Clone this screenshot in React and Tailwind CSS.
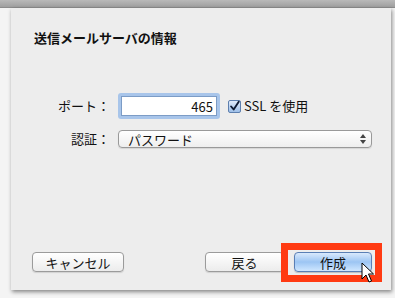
import React from "react";

const jp = { fontFamily: '"Lucida Grande", "Noto Sans CJK JP", "Noto Sans", sans-serif' };

const MacButton = ({ label, width, primary }) => (
  <div
    className={
      "h-[20px] rounded-[4px] border flex items-center justify-center text-[13px] leading-none text-[#111] " +
      (primary
        ? "border-[#5a7fb5] bg-gradient-to-b from-[#d9e9fc] via-[#9cc5f3] to-[#cfe7ff] shadow-[0_1px_1px_rgba(0,0,0,0.2)]"
        : "border-[#9b9b9b] bg-gradient-to-b from-white to-[#ececec] shadow-[0_1px_1px_rgba(0,0,0,0.12)]")
    }
    style={{ width }}
  >
    {label}
  </div>
);

const Cursor = () => (
  <svg width="14" height="22" viewBox="0 0 14 22" className="absolute left-[361px] top-[262px]">
    <path
      d="M1 1 L1 17 L5 13 L8 20 L10.5 19 L7.5 12 L12.5 12 Z"
      fill="white"
      stroke="black"
      strokeWidth="1"
      strokeLinejoin="round"
    />
  </svg>
);

export default function App() {
  return (
    <div className="relative w-[395px] h-[298px] overflow-hidden bg-[#f4f4f4]" style={jp}>
      <div className="h-[8px] bg-gradient-to-b from-[#b9b9b9] to-[#9f9f9f] border-b border-[#8c8c8c]" />

      <div className="ml-[11px] w-[380px] h-[282px] bg-[#ededed] shadow-[1px_2px_4px_rgba(0,0,0,0.45)] flex flex-col">
        <div className="pt-[21px] pl-[23px] h-[39px] text-[13px] leading-[18px] font-bold text-[#111]">
          送信メールサーバの情報
        </div>

        <div className="mt-[46px] h-[26px] flex items-center text-[13px] text-[#111]">
          <div className="w-[99px] text-right">ポート：</div>
          <div className="ml-[8px] w-[102px] h-[26px] p-[3px] rounded-[3px] bg-[#a8c5ea]">
            <div className="h-full bg-white border border-[#7c9cc6] flex items-center justify-end pr-[3px] leading-none">
              465
            </div>
          </div>
          <div className="ml-[8px] w-[13px] h-[13px] rounded-[2px] border border-[#5d7fae] bg-gradient-to-b from-[#dfeafa] to-[#9ebfe8] flex items-center justify-center">
            <svg width="13" height="13" viewBox="0 0 13 13">
              <path d="M2.5 6.5 L5.5 10 L11.5 1" fill="none" stroke="#0d1a33" strokeWidth="2.2" strokeLinecap="round" strokeLinejoin="round" />
            </svg>
          </div>
          <div className="ml-[3px]">SSL を使用</div>
        </div>

        <div className="mt-[11px] h-[18px] flex items-center text-[13px] text-[#111]">
          <div className="w-[99px] text-right">認証：</div>
          <div className="ml-[8px] w-[254px] h-[18px] rounded-[4px] border border-[#999] bg-gradient-to-b from-white to-[#eeeeee] shadow-[0_1px_1px_rgba(0,0,0,0.1)] flex items-center pl-[9px] pr-[5px]">
            <div className="flex-1 leading-none">パスワード</div>
            <div className="flex flex-col items-center gap-[2px] text-[#444]">
              <svg width="6" height="4" viewBox="0 0 6 4"><path d="M0 4 L3 0 L6 4 Z" fill="currentColor" /></svg>
              <svg width="6" height="4" viewBox="0 0 6 4"><path d="M0 0 L3 4 L6 0 Z" fill="currentColor" /></svg>
            </div>
          </div>
        </div>

        <div className="mt-[104px] pl-[21px] pr-[19px] flex items-center">
          <MacButton label="キャンセル" width={92} />
          <div className="ml-auto">
            <MacButton label="戻る" width={79} />
          </div>
          <div className="relative ml-[10px]">
            <MacButton label="作成" width={78} primary />
            <div className="absolute left-[-13px] top-[-9px] w-[101px] h-[39px] border-[7px] border-[#ff3a12]" />
          </div>
        </div>
      </div>

      <Cursor />
    </div>
  );
}
